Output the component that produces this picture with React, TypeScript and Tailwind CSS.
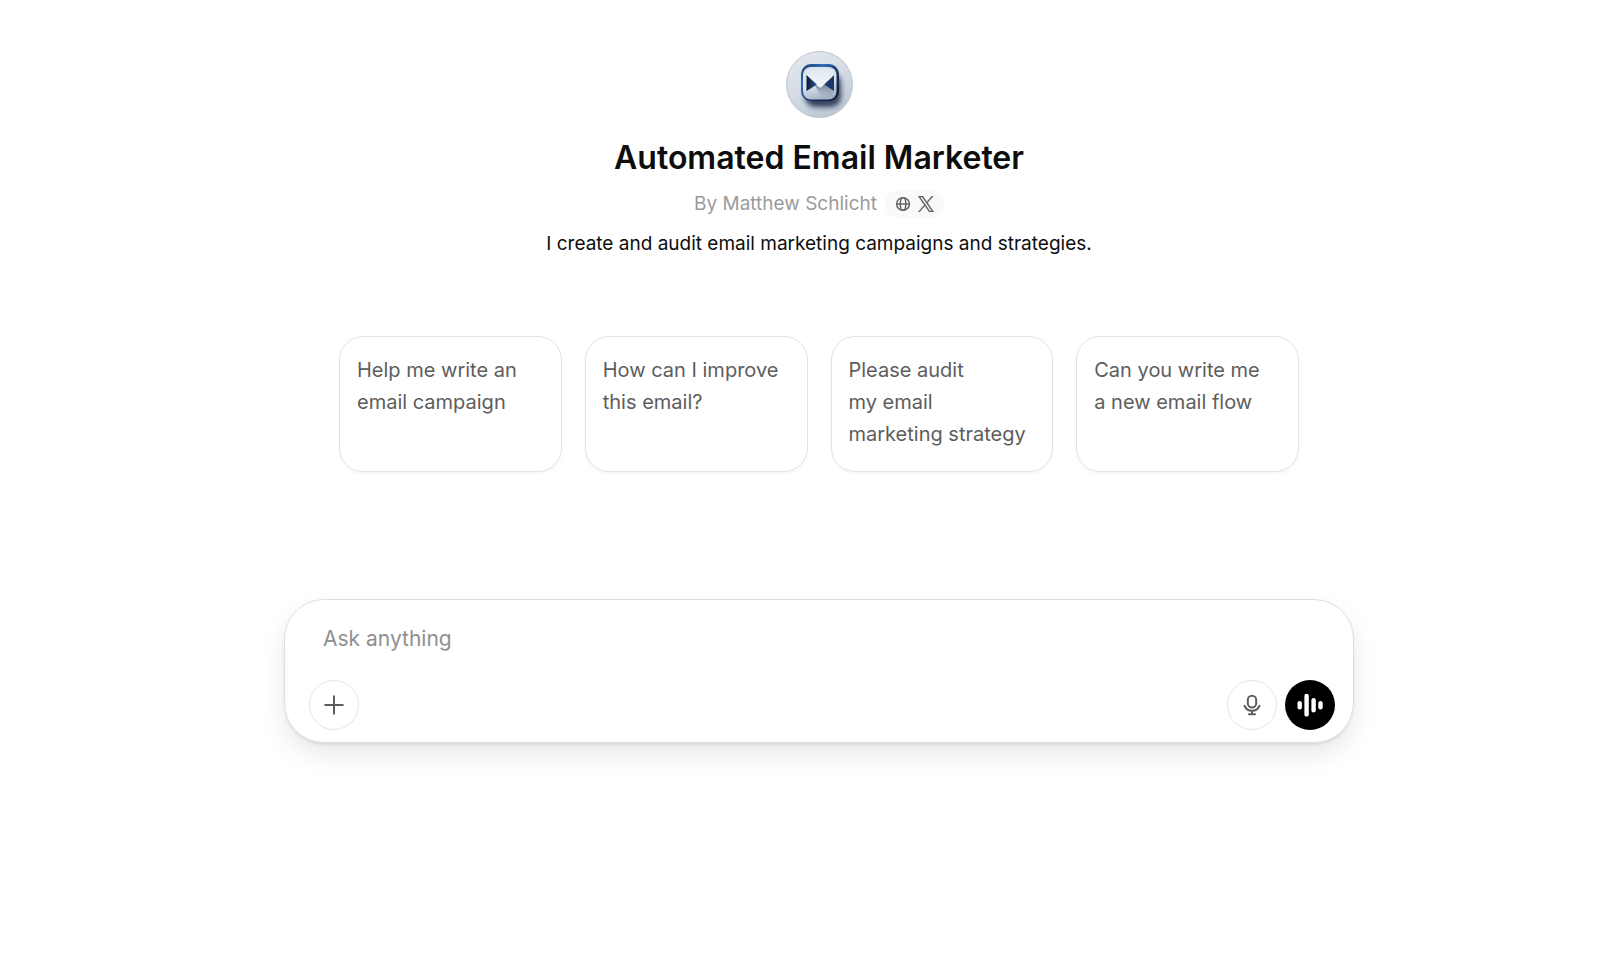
import { useState } from 'react'

const starters = [
  ['Help me write an', 'email campaign'],
  ['How can I improve', 'this email?'],
  ['Please audit', 'my email', 'marketing strategy'],
  ['Can you write me', 'a new email flow'],
]

function Avatar() {
  return (
    <svg viewBox="0 0 67 67" className="size-[67px]" role="img" aria-label="Automated Email Marketer">
      <defs>
        <linearGradient id="disc" x1="0.2" y1="0" x2="0.7" y2="1">
          <stop offset="0" stopColor="#e3e8ed" />
          <stop offset="0.5" stopColor="#d5dce5" />
          <stop offset="1" stopColor="#bac6d4" />
        </linearGradient>
        <linearGradient id="frame" x1="0" y1="0" x2="1" y2="1">
          <stop offset="0" stopColor="#173765" />
          <stop offset="0.3" stopColor="#2f6cbb" />
          <stop offset="0.6" stopColor="#1a3460" />
          <stop offset="1" stopColor="#0e182d" />
        </linearGradient>
        <linearGradient id="face" x1="0.3" y1="0" x2="0.6" y2="1">
          <stop offset="0" stopColor="#dbe4ef" />
          <stop offset="0.5" stopColor="#dde4ed" />
          <stop offset="1" stopColor="#a3afc3" />
        </linearGradient>
        <linearGradient id="flap" x1="0" y1="0" x2="0" y2="1">
          <stop offset="0" stopColor="#dfe7f0" />
          <stop offset="1" stopColor="#f6f8fb" />
        </linearGradient>
        <linearGradient id="fold" x1="0" y1="0" x2="1" y2="0">
          <stop offset="0" stopColor="#0c1a33" />
          <stop offset="1" stopColor="#2c5796" />
        </linearGradient>
        <linearGradient id="crease" x1="0" y1="0" x2="0" y2="1">
          <stop offset="0" stopColor="#33435f" stopOpacity="0.9" />
          <stop offset="1" stopColor="#7483a0" stopOpacity="0" />
        </linearGradient>
        <filter id="soft" x="-50%" y="-50%" width="200%" height="200%">
          <feGaussianBlur stdDeviation="2.5" />
        </filter>
        <clipPath id="round">
          <circle cx="33.5" cy="33.5" r="33" />
        </clipPath>
      </defs>
      <circle cx="33.5" cy="33.5" r="33" fill="url(#disc)" />
      <g clipPath="url(#round)">
        <rect x="19" y="22" width="36" height="34" rx="10" fill="#1a2b49" opacity="0.85" filter="url(#soft)" />
      </g>
      <rect x="15" y="13" width="38" height="37" rx="10" fill="url(#frame)" />
      <rect x="17" y="16" width="33.5" height="32.5" rx="8" fill="url(#face)" />
      <path d="M28 33L34.5 37L42 29L47.5 40L45 46.5H36Z" fill="url(#crease)" />
      <path d="M20.5 24L31 33.5L20.5 40Z" fill="url(#fold)" />
      <path d="M48 24L38.5 33.5L48 40Z" fill="#1a376a" />
      <path d="M20.5 23.5L33 35.5Q34.5 37 36 35.5L48 23.5L44 18H25Z" fill="url(#flap)" />
      <circle cx="33.5" cy="33.5" r="33" fill="none" stroke="#bcc4cc" strokeWidth="1" />
    </svg>
  )
}

function GlobeIcon() {
  return (
    <svg viewBox="0 0 16 16" className="size-4" fill="none" stroke="currentColor" strokeWidth="1.4" aria-hidden="true">
      <circle cx="8" cy="8" r="6.4" />
      <ellipse cx="8" cy="8" rx="2.8" ry="6.4" />
      <path d="M1.6 8H14.4" />
    </svg>
  )
}

function XIcon() {
  return (
    <svg viewBox="0 0 24 24" className="size-4" fill="currentColor" stroke="currentColor" strokeWidth="0.6" aria-hidden="true">
      <path d="M14.234 10.162 22.977 0h-2.072l-7.591 8.824L7.251 0H.258l9.168 13.343L.258 24H2.33l8.016-9.318L16.749 24h6.993zm-2.837 3.299-.929-1.329L3.076 1.56h3.182l5.965 8.532.929 1.329 7.754 11.09h-3.182z" />
    </svg>
  )
}

function PlusIcon() {
  return (
    <svg viewBox="0 0 20 20" className="size-5" fill="none" stroke="currentColor" strokeWidth="2" strokeLinecap="round" aria-hidden="true">
      <path d="M10 1.2V18.8M1.2 10H18.8" />
    </svg>
  )
}

function MicIcon() {
  return (
    <svg viewBox="0 0 20 22" className="h-[22px] w-5" fill="none" stroke="currentColor" strokeWidth="2" strokeLinecap="round" aria-hidden="true">
      <rect x="5.8" y="1.8" width="8.4" height="11.6" rx="4.2" />
      <path d="M2.6 11.8C3.8 14.8 6.6 16.7 10 16.7S16.2 14.8 17.4 11.8M10 17V20M7 20.2H13" />
    </svg>
  )
}

function VoiceIcon() {
  return (
    <svg viewBox="0 0 26 24" className="h-6 w-[26px]" fill="currentColor" aria-hidden="true">
      <rect x="0.5" y="8" width="4.4" height="8.4" rx="2.2" />
      <rect x="7.4" y="0.8" width="4.4" height="22.8" rx="2.2" />
      <rect x="14.4" y="5" width="4.4" height="14.4" rx="2.2" />
      <rect x="21.3" y="8" width="4.4" height="8.4" rx="2.2" />
    </svg>
  )
}

export default function App() {
  const [prompt, setPrompt] = useState('')

  const roundButton = 'flex size-[50px] items-center justify-center rounded-full'

  return (
    <main className="flex min-h-screen flex-col items-center bg-white pt-[51px] pl-[38px] font-['Inter','Liberation_Sans',sans-serif] text-[#0d0d0d]">
      <Avatar />
      <h1 className="mt-5 text-[32px] leading-10 font-semibold">Automated Email Marketer</h1>
      <div className="mt-3 flex items-center gap-2 text-[19px] leading-7 text-[#9b9b9b]">
        <span>By Matthew Schlicht</span>
        <span className="flex h-7 items-center gap-[7px] rounded-full bg-[#f9f9f9] px-2.5 text-[#5d5d5d]">
          <a href="#website" aria-label="Website">
            <GlobeIcon />
          </a>
          <a href="#x" aria-label="X">
            <XIcon />
          </a>
        </span>
      </div>
      <p className="mt-3 text-[19px] leading-7">I create and audit email marketing campaigns and strategies.</p>

      <div className="mt-[78px] grid w-full max-w-[960px] grid-cols-4 gap-[23px]">
        {starters.map((lines) => (
          <button
            key={lines[0]}
            className="flex h-[136px] flex-col items-start rounded-3xl border border-[#e3e3e3] px-[17px] pt-[17px] text-left text-[20px] leading-8 text-[#5d5d5d] shadow-[0_2px_3px_rgba(0,0,0,0.04)]"
            onClick={() => setPrompt(lines.join(' '))}
          >
            {lines.map((line) => (
              <span key={line} className="whitespace-nowrap">
                {line}
              </span>
            ))}
          </button>
        ))}
      </div>

      <form
        className="mt-[127px] w-full max-w-[1070px] rounded-[40px] border border-[#dedede] px-6 pt-5 pb-3 shadow-[0_12px_26px_rgba(0,0,0,0.09),0_2px_2px_rgba(0,0,0,0.08)]"
        onSubmit={(e) => e.preventDefault()}
      >
        <input
          type="text"
          aria-label="Ask anything"
          placeholder="Ask anything"
          value={prompt}
          onChange={(e) => setPrompt(e.target.value)}
          className="block h-9 w-full px-3.5 text-[21px] outline-none placeholder:text-[#8f8f8f]"
        />
        <div className="mt-6 -mr-1.5 flex items-center gap-2">
          <button type="button" aria-label="Add" className={`${roundButton} mr-auto border border-[#e5e5e5] text-[#5d5d5d]`}>
            <PlusIcon />
          </button>
          <button type="button" aria-label="Dictate" className={`${roundButton} border border-[#e5e5e5] text-[#5d5d5d]`}>
            <MicIcon />
          </button>
          <button type="button" aria-label="Voice mode" className={`${roundButton} bg-black text-white`}>
            <VoiceIcon />
          </button>
        </div>
      </form>
    </main>
  )
}
